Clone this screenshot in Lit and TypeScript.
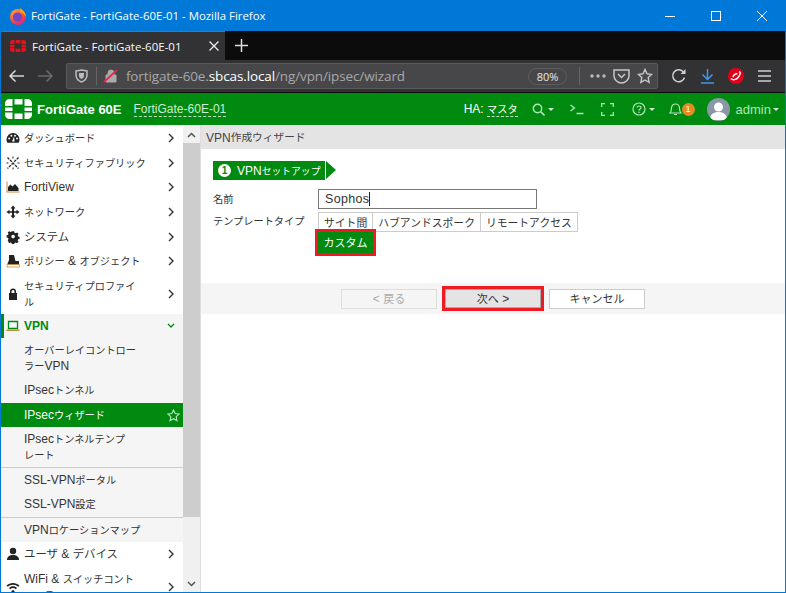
import { LitElement, html, css, svg } from "lit";
import { customElement } from "lit/decorators.js";

const j = (t: string) => t.split(/([\u3000-\u9fff\uff00-\uffef]+)/).map((p, i) => (i % 2 ? html`<span class="j">${p}</span>` : p));

const chev = html`<svg class="chev" width="8" height="10" viewBox="0 0 8 10"><path d="M2 1l4 4-4 4" fill="none" stroke="#333" stroke-width="1.400"/></svg>`;
const ic = (p: any) => html`<svg class="mi" width="14" height="14" viewBox="0 0 14 14" fill="#222">${p}</svg>`;

const icons: Record<string, any> = {
  dash: ic(svg`<path d="M7 2a6.500 6.500 0 0 0-6.500 6.500c0 1.200.3 2.200.9 3.200h11.200c.6-1 .9-2 .9-3.200A6.500 6.500 0 0 0 7 2z"/><circle cx="3.200" cy="7.600" r="1" fill="#fff"/><circle cx="5.400" cy="4.800" r="1" fill="#fff"/><circle cx="9" cy="4.800" r="1" fill="#fff"/><circle cx="11" cy="7.600" r="1" fill="#fff"/><path d="M6 10.500l2-5 .6 5z" fill="#fff"/>`),
  fabric: ic(svg`<g stroke="#222" stroke-width="1.300" stroke-dasharray="2.600 1"><path d="M1.500 1.500l11 11M12.500 1.500l-11 11"/></g><path d="M7 .5v2M.5 7h2M11.500 7h2M7 11.500v2" stroke="#222"/>`),
  view: ic(svg`<path d="M.5 1.500v11h13v-1h-12v-10z" fill="#c78a3c"/><path d="M2 11V7l2.500-2.500L6.500 6.500 9 4l3.500 4v3z"/>`),
  net: ic(svg`<path d="M7 .5L9.500 3.500H8v2.700h2.500V4.700L13.500 7l-3 2.300V7.800H8v2.700h1.500L7 13.500l-2.500-3H6V7.800H3.500v1.500L.5 7l3-2.300v1.500H6V3.500H4.500z"/>`),
  sys: ic(svg`<path fill-rule="evenodd" d="M5.800 1h2.400l.4 1.700 1.300.6 1.500-.9 1.600 1.700-.9 1.400.5 1.300 1.600.4v2.400l-1.600.4-.5 1.300.9 1.400-1.600 1.700-1.500-.9-1.300.5-.4 1.700H5.800l-.4-1.700-1.300-.5-1.500.9L1 11l.9-1.400-.5-1.300L-.2 7.900V5.500l1.600-.4.5-1.300L1 2.400 2.600 1l1.500.9 1.300-.6zM7 5a2 2 0 1 0 0 4 2 2 0 0 0 0-4z" transform="translate(.8 .3) scale(.9)"/>`),
  policy: ic(svg`<path d="M3 1h5l1.500 6H13v4H1l2-5z"/><path d="M1 10.500h12.500v2.500H1z" fill="#fff" stroke="#c78a3c" stroke-width=".8"/>`),
  lock: ic(svg`<path d="M4 6V4.500a3 3 0 0 1 6 0V6h1v7H3V6zM5.500 6h3V4.500a1.500 1.500 0 0 0-3 0z"/>`),
  vpn: ic(svg`<path d="M2.500 2.500h9v7h-9z" fill="none" stroke="#008a0f" stroke-width="1.300"/><path d="M.5 10.500h13v1.500H.5z" fill="#c78a3c"/>`),
  user: ic(svg`<circle cx="7" cy="4" r="3.200"/><path d="M1 13c0-3.500 2.500-5 6-5s6 1.500 6 5z"/>`),
  wifi: ic(svg`<path d="M.5 5.500C4 2 10 2 13.500 5.500l-1.300 1.300C9.500 4 4.500 4 1.800 6.800zM3 8C5.200 5.800 8.800 5.800 11 8L9.800 9.200c-1.500-1.500-4-1.500-5.600 0zM7 9.800l1.800 1.700L7 13.200l-1.800-1.700z"/>`),
};

const logo = (c: string, w: number, h: number) => html`<svg width=${w} height=${h} viewBox="0 0 27 20" fill=${c}>
  <path d="M0 7V4.500A4.500 4.500 0 0 1 4.500 0H7.500V7zM9.500 0h8v5.500h-8zM19.500 0H22.500A4.500 4.500 0 0 1 27 4.500V7H19.500zM0 8.500h7.500v3.500H0zM19.500 8.500H27v3.500h-7.500zM0 13.500h7.500V20H4.500A4.500 4.500 0 0 1 0 15.500zM9.500 14.500h8V20h-8zM19.500 13.500H27v2A4.500 4.500 0 0 1 22.500 20H19.500z"/></svg>`;

@customElement("app-root")
export class AppRoot extends LitElement {
  static styles = css`
    :host { display: block; width: 786px; height: 593px; }
    * { box-sizing: border-box; }
    .j { font-size: 10.200px; line-height: 1; font-family: "Noto Sans CJK JP", sans-serif; }
    .win { width: 786px; height: 593px; border: 1px solid #0078d7; border-top: 0; display: flex; flex-direction: column; overflow: hidden; font-family: "Liberation Sans", "Noto Sans CJK JP", sans-serif; font-size: 12px; color: #333; background: #fff; }
    .title { height: 31px; flex: none; background: #0078d7; color: #fff; display: flex; align-items: center; padding-left: 8px; font: 11.400px "Open Sans", "Noto Sans", sans-serif; }
    .title .fx { margin-right: 4px; }
    .title .txt { flex: 1; }
    .wbtn { width: 46px; height: 31px; display: flex; align-items: center; justify-content: center; }
    .tabs { height: 29px; flex: none; background: #0c0c0d; display: flex; align-items: stretch; }
    .tab { width: 224px; background: #323234; border-top: 1px solid #0a84ff; color: #f9f9fa; display: flex; align-items: center; padding: 0 6px 0 9px; font: 11.500px "Open Sans", "Noto Sans", sans-serif; gap: 6px; }
    .tab .t { flex: 1; white-space: nowrap; }
    .plus { width: 32px; display: flex; align-items: center; justify-content: center; }
    .tools { height: 33px; flex: none; background: #323234; border-bottom: 1px solid #0c0c0d; display: flex; align-items: center; padding-left: 7px; }
    .nav { display: flex; gap: 14px; width: 58px; align-items: center; }
    .urlbar { width: 593px; height: 26px; background: #474749; border: 1px solid #5a5a5c; border-radius: 2px; display: flex; align-items: center; padding-left: 8px; }
    .urlbar .u { font: 13.500px "Open Sans", "Noto Sans", sans-serif; color: #a8a8aa; white-space: nowrap; margin-left: 7px; letter-spacing: -.120px; }
    .urlbar .u b { font-weight: 400; color: #fff; }
    .sep { width: 1px; height: 18px; background: #666; }
    .sep1 { margin: 0 6px 0 8px; }
    .sep2 { margin: 0 10px 0 12px; }
    .zoom { font: 11px "Open Sans", sans-serif; color: #e8e8e8; border: 1px solid #5e5e60; border-radius: 9px; width: 39px; height: 17px; display: flex; align-items: center; justify-content: center; margin-left: auto; }
    .urlr { display: flex; align-items: center; gap: 7px; padding-right: 4px; }
    .rt { display: flex; align-items: center; margin-left: 13px; }
    .rt svg { margin-right: 14px; }
    .hdr { height: 32px; flex: none; background: #008a0f; color: #fff; display: flex; align-items: center; padding-left: 4px; }
    .brand { font-weight: 700; font-size: 13px; margin-left: 5px; white-space: nowrap; }
    .host { margin-left: 12px; color: #cdeccf; font-size: 12px; border-bottom: 1px dashed #bfe3c1; line-height: 14px; }
    .right { margin-left: auto; display: flex; align-items: center; padding-right: 6px; color: #fff; }
    .ha { margin-right: 14px; }
    .ha span.m { border-bottom: 1px dashed #bfe3c1; }
    .hi { display: flex; align-items: center; color: #a8e0b0; }
    .s1 { margin-right: 16px; }
    .s2 { margin-right: 17px; }
    .s3 { margin-right: 18px; }
    .s4 { margin-right: 14px; }
    .s5 { margin-right: 12px; }
    .admin { color: #b0e6b8; font-size: 13px; }
    .caret { width: 0; height: 0; border: 3px solid transparent; border-top: 3px solid #cfe9d2; border-bottom: 0; margin-left: 3px; }
    .admin .caret { margin-left: 2px; }
    .badge { width: 13px; height: 13px; background: #e68a22; border-radius: 50%; color: #fff; font-size: 9px; display: flex; align-items: center; justify-content: center; }
    .avatar { width: 23px; height: 23px; border-radius: 50%; background: #8a97a4; overflow: hidden; margin-right: 6px; }
    .main { flex: 1; display: flex; min-height: 0; }
    .side { width: 199px; flex: none; display: flex; border-top: 1px solid #e8e8e8; overflow: hidden; }
    .menu { width: 182px; flex: none; background: #fff; overflow: hidden; }
    .row { min-height: 24.600px; display: flex; align-items: center; padding: 0 5px; line-height: 16px; color: #333; }
    .row.w .j { font-size: 11.400px; }
    .row.l2 { background: #f5f5f5; padding-left: 23px; }
    .row.two { padding-top: 4px; padding-bottom: 4px; }
    .row.sub2 { padding-top: 4px; padding-bottom: 4px; }
    .row.sel { background: #008a0f; color: #fff; padding-right: 3px; }
    .row.open { background: #f5f5f5; color: #008a0f; font-weight: 700; border-left: 3px solid #008a0f; padding-left: 2px; }
    .row.line { border-top: 1px solid #ccc; }
    .row.tall { min-height: 25.600px; }
    .mi { flex: none; margin-right: 4px; }
    .row .lb { flex: 1; width: 0; }
    .wrap1 { padding-right: 20px; }
    .wrap2 { padding-right: 39px; }
    .wrap3 { padding-right: 48px; }
    .chev { flex: none; margin: 0 3px 0 8px; }
    .sb { width: 17px; flex: none; background: #f0f0f0; display: flex; flex-direction: column; justify-content: space-between; }
    .sbb { height: 17px; display: flex; align-items: center; justify-content: center; }
    .thumb { flex: 1; }
    .thumbin { background: #cdcdcd; height: 374px; }
    .content { flex: 1; display: flex; flex-direction: column; border-top: 1px solid #e8e8e8; border-left: 1px solid #ddd; }
    .chead { height: 23px; flex: none; background: #e4e4e4; padding-left: 5px; display: flex; align-items: center; color: #444; white-space: pre; }
    .chead .j { font-size: 10.700px; }
    .step { margin: 12px 0 0 12px; display: flex; height: 19px; color: #fff; }
    .step .j { font-size: 9.800px; }
    .stepb { background: #008a0f; display: flex; align-items: center; padding: 0 5px; gap: 6px; margin-right: 1px; }
    .num { width: 13px; height: 13px; background: #fff; color: #008a0f; border-radius: 50%; font-size: 10px; font-weight: 700; display: flex; align-items: center; justify-content: center; }
    .arrow { width: 0; height: 0; border-left: 10px solid #008a0f; border-top: 9.500px solid transparent; border-bottom: 9.500px solid transparent; }
    .form { display: grid; grid-template-columns: 105px 1fr; margin: 9px 0 0 12px; row-gap: 3px; align-items: center; }
    .inp { width: 219px; height: 20px; border: 1px solid #777; padding-left: 6px; display: flex; align-items: center; font-size: 12.500px; color: #333; letter-spacing: .300px; }
    .cursor { width: 1px; height: 14px; background: #222; }
    .lab2 { align-self: start; padding-top: 2px; }
    .tplw { display: flex; flex-direction: column; align-items: flex-start; }
    .tpl { display: flex; height: 20px; border: 1px solid #ccc; }
    .tpl .j { font-size: 10.800px; }
    .cust .j, .foot .j { font-size: 11px; }
    .tpl span.c { padding: 0 5px; display: flex; align-items: center; white-space: nowrap; border-right: 1px solid #ccc; }
    .tpl span.c:last-child { border-right: 0; }
    .cust { margin: -3px 0 0 -3px; width: 61px; height: 27px; border: 3px solid #ed1c24; background: #fff; }
    .cust div { height: 100%; background: #008a0f; color: #fff; display: flex; align-items: center; justify-content: center; }
    .spacer { height: 27px; }
    .foot { height: 31px; background: #f5f5f5; display: flex; align-items: center; padding-left: 140px; }
    .btn { height: 20px; width: 96px; border: 1px solid #ccc; background: #fff; display: flex; align-items: center; justify-content: center; color: #333; white-space: pre; }
    .btn.dis { color: #aaa; background: #f5f5f5; border-color: #ddd; }
    .next { margin: 0 5px; width: 102px; height: 25px; border: 3px solid #ed1c24; background: #fff; }
    .next div { height: 100%; background: #e4e4e4; border: 1px solid #aaa; display: flex; align-items: center; justify-content: center; white-space: pre; }
  `;

  render() {
    const m = (ico: string, t: string, cls = "", wrap = "") => html`<div class="row ${cls}">${icons[ico]}<span class="lb ${wrap}">${j(t)}</span>${chev}</div>`;
    const s = (t: string, cls = "") => html`<div class="row l2 ${cls}"><span class="lb">${j(t)}</span></div>`;
    return html`<div class="win">
      <div class="title">
        <svg class="fx" width="18" height="18" viewBox="0 0 18 18"><defs><linearGradient id="fg" x1="0" y1="0" x2=".6" y2="1"><stop offset="0" stop-color="#ffb52e"/><stop offset=".6" stop-color="#f6503a"/><stop offset="1" stop-color="#d92a80"/></linearGradient></defs><circle cx="9" cy="10" r="8" fill="url(#fg)"/><circle cx="8.500" cy="10" r="4.500" fill="#6f47c8"/><path d="M11 1c3 2 6 5 6 9-1-2-4-5-7-5 1-1 2-2 1-4z" fill="#ffa11e"/></svg>
        <span class="txt">FortiGate - FortiGate-60E-01 - Mozilla Firefox</span>
        <div class="wbtn"><svg width="10" height="10"><path d="M0 5.500h10" stroke="#fff"/></svg></div>
        <div class="wbtn"><svg width="10" height="10"><rect x=".5" y=".5" width="9" height="9" fill="none" stroke="#fff"/></svg></div>
        <div class="wbtn"><svg width="10" height="10"><path d="M0 0l10 10M10 0L0 10" stroke="#fff"/></svg></div>
      </div>
      <div class="tabs">
        <div class="tab">${logo("#e8101a", 16, 12)}<span class="t">FortiGate - FortiGate-60E-01</span>
          <svg width="10" height="10"><path d="M.5.500l9 9M9.500.500l-9 9" stroke="#eee" stroke-width="1.300"/></svg></div>
        <div class="plus"><svg width="13" height="13"><path d="M6.500 0v13M0 6.500h13" stroke="#ddd" stroke-width="1.500"/></svg></div>
      </div>
      <div class="tools">
        <div class="nav">
          <svg width="16" height="14" viewBox="0 0 16 14"><path d="M16 7H2M7.500 1.500L2 7l5.500 5.500" fill="none" stroke="#d8d8d8" stroke-width="1.500"/></svg>
          <svg width="16" height="14" viewBox="0 0 16 14"><path d="M0 7h14M8.500 1.500L14 7l-5.500 5.500" fill="none" stroke="#6a6a6c" stroke-width="1.500"/></svg>
        </div>
        <div class="urlbar">
          <svg width="13" height="14" viewBox="0 0 13 14"><path d="M1 2l5.500-1L12 2v4c0 4-3 6-5.500 7C4 12 1 10 1 6z" fill="none" stroke="#bbb" stroke-width="1.500"/><path d="M4 4h5v3c0 1.500-1.500 2.500-2.500 3C5.500 9.500 4 8.500 4 7z" fill="#bbb"/></svg>
          <span class="sep sep1"></span>
          <svg width="16" height="16" viewBox="0 0 16 16"><path d="M3 7h10v7H3zM5 7V5a3 3 0 0 1 6 0v2" fill="#aaa" stroke="#aaa"/><path d="M1 14L14 2" stroke="#e22850" stroke-width="1.800"/></svg>
          <span class="u">fortigate-60e.<b>sbcas.local</b>/ng/vpn/ipsec/wizard</span>
          <span class="zoom">80%</span>
          <span class="sep sep2"></span>
          <div class="urlr">
            <svg width="16" height="4"><circle cx="2" cy="2" r="1.700" fill="#bbb"/><circle cx="8" cy="2" r="1.700" fill="#bbb"/><circle cx="14" cy="2" r="1.700" fill="#bbb"/></svg>
            <svg width="17" height="16" viewBox="0 0 17 16"><path d="M1 2h15v6c0 4-4 7-7.500 7S1 12 1 8z" fill="none" stroke="#c8c8c8" stroke-width="1.500"/><path d="M5 6l3.500 3.500L12 6" fill="none" stroke="#c8c8c8" stroke-width="1.500"/></svg>
            <svg width="16" height="16" viewBox="0 0 16 16"><path d="M8 1.500l2 4.300 4.600.6-3.400 3.200.9 4.700L8 12l-4.100 2.300.9-4.700L1.400 6.400 6 5.800z" fill="none" stroke="#c8c8c8" stroke-width="1.400"/></svg>
          </div>
        </div>
        <div class="rt">
          <svg width="16" height="16" viewBox="0 0 16 16"><path d="M13.500 9.500A6 6 0 1 1 12 3.500L14 5" fill="none" stroke="#d0d0d0" stroke-width="1.500"/><path d="M14.500 1v5h-5z" fill="#d0d0d0"/></svg>
          <svg width="13" height="15" viewBox="0 0 13 15"><path d="M6.500 0v10M1.500 5.500l5 5 5-5M0 14h13" fill="none" stroke="#3d9bf0" stroke-width="1.500"/></svg>
          <svg width="16" height="16" viewBox="0 0 16 16"><circle cx="8" cy="8" r="8" fill="#e2001a"/><path d="M3 10.500c1.500 2 5.500 1.500 7.500-1.500s2.500-4.500.5-5.500M5 9c.5-2 3-4 4.500-3" fill="none" stroke="#fff" stroke-width="1.400"/></svg>
          <svg width="13" height="12"><path d="M0 1h13M0 6h13M0 11h13" stroke="#d0d0d0" stroke-width="1.700"/></svg>
        </div>
      </div>
      <div class="hdr">
        ${logo("#fff", 27, 20)}
        <span class="brand">FortiGate 60E</span>
        <span class="host">FortiGate-60E-01</span>
        <div class="right">
          <span class="ha">HA: <span class="m">${j("マスタ")}</span></span>
          <span class="hi s1"><svg width="13" height="13" viewBox="0 0 13 13"><circle cx="5.500" cy="5.500" r="4.200" fill="none" stroke="#b0e6b8" stroke-width="1.400"/><path d="M8.500 8.500l4 4" stroke="#b0e6b8" stroke-width="1.600"/></svg><span class="caret"></span></span>
          <span class="hi s2"><svg width="14" height="12" viewBox="0 0 14 12"><path d="M.5 2l4 3-4 3M6.500 10.500H13.500" fill="none" stroke="#b0e6b8" stroke-width="1.300"/></svg></span>
          <span class="hi s3"><svg width="13" height="13" viewBox="0 0 13 13"><path d="M.7 4V.7H4M9 .7h3.300V4M12.300 9v3.300H9M4 12.300H.7V9" fill="none" stroke="#b0e6b8" stroke-width="1.300"/></svg></span>
          <span class="hi s4"><svg width="14" height="14" viewBox="0 0 14 14"><circle cx="7" cy="7" r="6" fill="none" stroke="#b0e6b8" stroke-width="1.200"/><path d="M5 5.500C5 3.500 9 3.500 9 5.500 9 7 7 7 7 8.500" fill="none" stroke="#b0e6b8" stroke-width="1.200"/><circle cx="7" cy="10.300" r=".8" fill="#b0e6b8"/></svg><span class="caret"></span></span>
          <span class="hi s5"><svg width="13" height="14" viewBox="0 0 13 14"><path d="M1 11c1-1 1.500-2 1.500-5a4 4 0 0 1 8 0c0 3 .5 4 1.500 5zM5 12.500h3" fill="none" stroke="#b0e6b8" stroke-width="1.200"/></svg><span class="badge">1</span></span>
          <div class="avatar"><svg width="23" height="23" viewBox="0 0 23 23"><circle cx="11.500" cy="9" r="4.500" fill="#fff"/><path d="M3 22c0-6 4-8 8.500-8s8.500 2 8.500 8z" fill="#fff"/></svg></div>
          <span class="hi admin">admin<span class="caret"></span></span>
        </div>
      </div>
      <div class="main">
        <div class="side">
          <div class="menu">
            ${m("dash", "ダッシュボード")}
            ${m("fabric", "セキュリティファブリック")}
            ${m("view", "FortiView")}
            ${m("net", "ネットワーク")}
            ${m("sys", "システム", "w")}
            ${m("policy", "ポリシー & オブジェクト")}
            ${m("lock", "セキュリティプロファイル", "two", "wrap1")}
            <div class="row open">${icons.vpn}<span class="lb">VPN</span><svg class="chev" width="8" height="6" viewBox="0 0 8 6"><path d="M1 1l3 3 3-3" fill="none" stroke="#008a0f" stroke-width="1.300"/></svg></div>
            <div class="row l2 sub2"><span class="lb wrap2">${j("オーバーレイコントローラーVPN")}</span></div>
            ${s("IPsecトンネル")}
            <div class="row l2 sel"><span class="lb">${j("IPsecウィザード")}</span><svg width="13" height="13" viewBox="0 0 14 14"><path d="M7 1l1.800 3.900 4.200.5-3.100 2.900.8 4.200L7 10.400l-3.700 2.100.8-4.200L1 5.400l4.200-.5z" fill="none" stroke="#b0e6b8" stroke-width="1.200"/></svg></div>
            <div class="row l2 sub2"><span class="lb wrap3">${j("IPsecトンネルテンプレート")}</span></div>
            ${s("SSL-VPNポータル", "line")}
            ${s("SSL-VPN設定")}
            ${s("VPNロケーションマップ", "line tall")}
            ${m("user", "ユーザ & デバイス", "w")}
            ${m("wifi", "WiFi & スイッチコントローラー", "two", "wrap1")}
          </div>
          <div class="sb">
            <div class="sbb"><svg width="9" height="6"><path d="M1 5l3.500-3.500L8 5" fill="none" stroke="#555" stroke-width="1.500"/></svg></div>
            <div class="thumb"><div class="thumbin"></div></div>
            <div class="sbb"><svg width="9" height="6"><path d="M1 1l3.500 3.500L8 1" fill="none" stroke="#555" stroke-width="1.500"/></svg></div>
          </div>
        </div>
        <div class="content">
          <div class="chead">${j("VPN作成ウィザード")}</div>
          <div class="step"><div class="stepb"><span class="num">1</span><span>${j("VPNセットアップ")}</span></div><div class="arrow"></div></div>
          <div class="form">
            <span>${j("名前")}</span>
            <div class="inp">Sophos<span class="cursor"></span></div>
            <span class="lab2">${j("テンプレートタイプ")}</span>
            <div class="tplw">
              <div class="tpl"><span class="c">${j("サイト間")}</span><span class="c">${j("ハブアンドスポーク")}</span><span class="c">${j("リモートアクセス")}</span></div>
              <div class="cust"><div>${j("カスタム")}</div></div>
            </div>
          </div>
          <div class="spacer"></div>
          <div class="foot">
            <div class="btn dis">${j("< 戻る")}</div>
            <div class="next"><div>${j("次へ >")}</div></div>
            <div class="btn">${j("キャンセル")}</div>
          </div>
        </div>
      </div>
    </div>`;
  }
}
